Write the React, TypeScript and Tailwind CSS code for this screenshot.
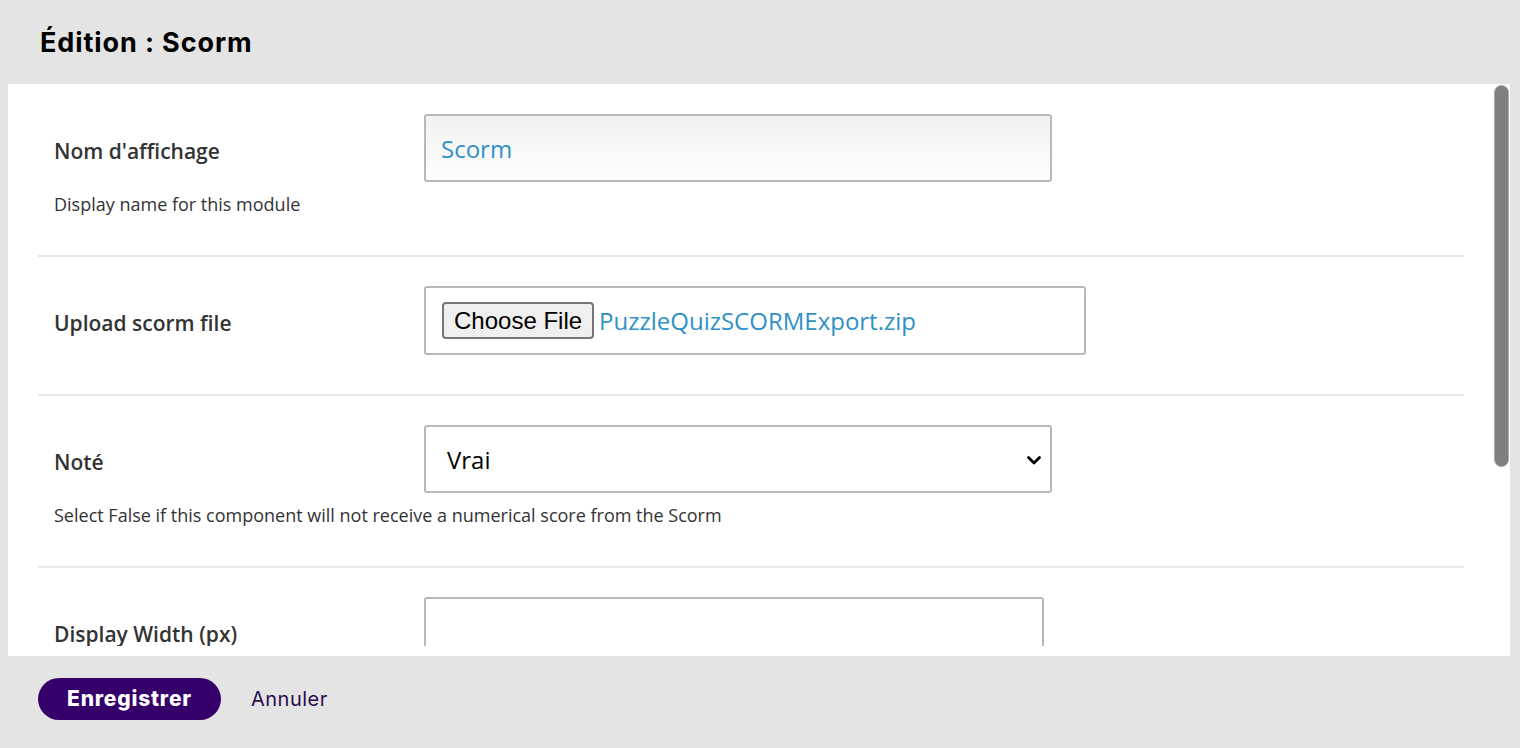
import React from 'react';

const body = "font-['Open_Sans','Liberation_Sans',sans-serif]";
const display = "font-['Inter','Liberation_Sans',sans-serif]";

interface FieldRowProps {
    label: string;
    help?: string;
    first?: boolean;
    children: React.ReactNode;
}

function FieldRow({ label, help, first, children }: FieldRowProps) {
    return (
        <div className={`px-[16px] pt-[29px] pb-[39px] ${first ? '' : 'border-t-2 border-[#e8e8e8]'}`}>
            <div className="flex items-center">
                <div className="w-[370px] text-[21px] font-semibold text-[#333] pt-[7px]">{label}</div>
                {children}
            </div>
            {help && (
                <p className="mt-[10px] text-[18px] leading-[24px] text-[#333]">{help}</p>
            )}
        </div>
    );
}

export default function App() {
    return (
        <div className={`w-[1520px] h-[748px] bg-[#e4e4e4] flex flex-col overflow-hidden ${body}`}>
            {/* Header */}
            <div className="h-[84px] shrink-0 flex items-center px-[40px] pt-[2px]">
                <h1 className={`${display} text-[27px] font-bold text-black tracking-[0.9px]`}>
                    Édition : Scorm
                </h1>
            </div>

            {/* Panel */}
            <div className="mx-[8px] w-[1502px] h-[572px] shrink-0 bg-white flex">
                <div className="flex-1 h-[562px] overflow-hidden pl-[30px] pr-[30px] pt-[1px]">
                    <FieldRow label="Nom d'affichage" help="Display name for this module" first>
                        <div className="w-[628px] h-[68px] border-2 border-[#b8b8b8] rounded-[3px] bg-gradient-to-b from-[#f1f1f1] to-[#fefefe] flex items-center px-[15px] pt-[2px]">
                            <span className="text-[24px] text-[#2f91c6]">Scorm</span>
                        </div>
                    </FieldRow>

                    <FieldRow label="Upload scorm file">
                        <div className="w-[662px] h-[69px] border-2 border-[#b8b8b8] rounded-[3px] bg-white flex items-center px-[16px] gap-[5px]">
                            <span className="h-[37px] px-[10px] flex items-center bg-[#efefef] border-2 border-[#767676] rounded-[4px] text-[24px] text-black font-['Liberation_Sans',sans-serif]">
                                Choose File
                            </span>
                            <span className="text-[24px] text-[#2f91c6]">PuzzleQuizSCORMExport.zip</span>
                        </div>
                    </FieldRow>

                    <FieldRow label="Noté" help="Select False if this component will not receive a numerical score from the Scorm">
                        <div className="w-[628px] h-[68px] border-2 border-[#b8b8b8] rounded-[3px] bg-white flex items-center justify-between pl-[21px] pr-[8px] pt-[2px]">
                            <span className="text-[24px] text-black">Vrai</span>
                            <svg width="16" height="16" viewBox="0 0 16 16" fill="none">
                                <path d="M2.5 5.5 L8 11 L13.5 5.5" stroke="#000" strokeWidth="2.8" strokeLinecap="round" strokeLinejoin="round" />
                            </svg>
                        </div>
                    </FieldRow>

                    <FieldRow label="Display Width (px)">
                        <div className="w-[620px] h-[68px] border-2 border-[#b8b8b8] rounded-[3px] bg-white" />
                    </FieldRow>
                </div>

                {/* Scrollbar */}
                <div className="w-[16px] shrink-0 pt-[1px]">
                    <div className="w-[15px] h-[382px] rounded-full bg-[#7f7f7f] border border-[#a9a9a9]" />
                </div>
            </div>

            {/* Footer */}
            <div className="flex-1 flex items-start pt-[22px] px-[38px] gap-[30px]">
                <button className={`${display} h-[42px] w-[183px] rounded-full bg-[#35006a] text-white text-[21px] font-extrabold tracking-[0.8px]`}>
                    Enregistrer
                </button>
                <button className={`${display} h-[42px] text-[20px] text-[#2a0d4f] tracking-[0.5px]`}>
                    Annuler
                </button>
            </div>
        </div>
    );
}
